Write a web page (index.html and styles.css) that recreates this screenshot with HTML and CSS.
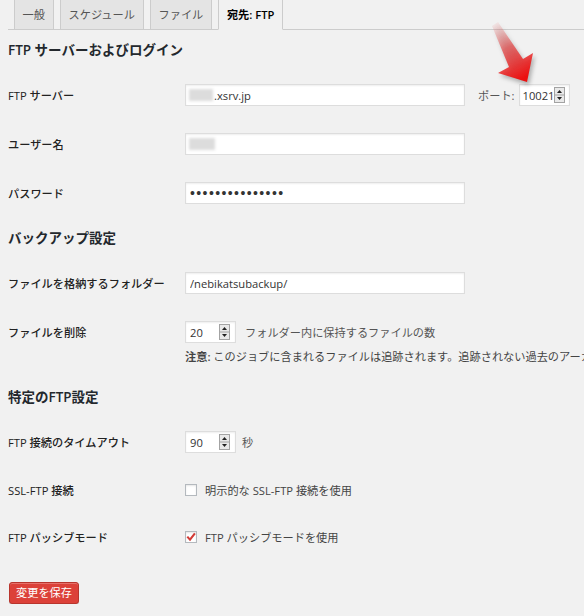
FILE: index.html
```html
<!DOCTYPE html>
<html lang="ja">
<head>
<meta charset="utf-8">
<title>宛先: FTP</title>
<link rel="stylesheet" href="styles.css">
</head>
<body>
<div class="page">
  <nav class="tabs">
    <a class="tab">一般</a>
    <a class="tab">スケジュール</a>
    <a class="tab">ファイル</a>
    <a class="tab active">宛先: FTP</a>
  </nav>

  <h3 class="section-title">FTP サーバーおよびログイン</h3>
  <div class="form-table">
    <div class="row">
      <div class="th">FTP サーバー</div>
      <div class="td line">
        <span class="field">
          <input class="text wide pad-blur" type="text" value=".xsrv.jp">
          <span class="blur b1"></span>
        </span>
        <span class="port-label">ポート:</span>
        <span class="numbox port"><input class="num" type="text" value="10021"><svg class="spin" width="11" height="16" viewBox="0 0 11 16"><rect x=".5" y=".5" width="10" height="15" fill="#e9e9e9" stroke="#a3a3a3"/><line x1="1" y1="8" x2="10" y2="8" stroke="#a3a3a3"/><path d="M5.5 3L8 6H3Z" fill="#222"/><path d="M5.5 13L8 10H3Z" fill="#222"/></svg></span>
      </div>
    </div>
    <div class="row">
      <div class="th">ユーザー名</div>
      <div class="td line">
        <span class="field">
          <input class="text wide" type="text" value="">
          <span class="blur b2"></span>
        </span>
      </div>
    </div>
    <div class="row">
      <div class="th">パスワード</div>
      <div class="td line">
        <input class="text wide pw" type="password" value="abcdefghijklmno">
      </div>
    </div>
  </div>

  <h3 class="section-title">バックアップ設定</h3>
  <div class="form-table">
    <div class="row">
      <div class="th">ファイルを格納するフォルダー</div>
      <div class="td line">
        <input class="text wide" type="text" value="/nebikatsubackup/">
      </div>
    </div>
    <div class="row row-note">
      <div class="th">ファイルを削除</div>
      <div class="td">
        <div class="line">
          <span class="numbox"><input class="num" type="text" value="20"><svg class="spin" width="11" height="16" viewBox="0 0 11 16"><rect x=".5" y=".5" width="10" height="15" fill="#e9e9e9" stroke="#a3a3a3"/><line x1="1" y1="8" x2="10" y2="8" stroke="#a3a3a3"/><path d="M5.5 3L8 6H3Z" fill="#222"/><path d="M5.5 13L8 10H3Z" fill="#222"/></svg></span>
          <span class="desc gap9">フォルダー内に保持するファイルの数</span>
        </div>
        <p class="note"><strong>注意:</strong> このジョブに含まれるファイルは追跡されます。追跡されない過去のアーカイブは削除されません。</p>
      </div>
    </div>
  </div>

  <h3 class="section-title">特定のFTP設定</h3>
  <div class="form-table">
    <div class="row">
      <div class="th">FTP 接続のタイムアウト</div>
      <div class="td line">
        <span class="numbox"><input class="num" type="text" value="90"><svg class="spin" width="11" height="16" viewBox="0 0 11 16"><rect x=".5" y=".5" width="10" height="15" fill="#e9e9e9" stroke="#a3a3a3"/><line x1="1" y1="8" x2="10" y2="8" stroke="#a3a3a3"/><path d="M5.5 3L8 6H3Z" fill="#222"/><path d="M5.5 13L8 10H3Z" fill="#222"/></svg></span>
        <span class="desc gap6">秒</span>
      </div>
    </div>
    <div class="row row-check">
      <div class="th">SSL-FTP 接続</div>
      <div class="td line">
        <label class="check"><span class="cb"></span>明示的な SSL-FTP 接続を使用</label>
      </div>
    </div>
    <div class="row row-check">
      <div class="th">FTP パッシブモード</div>
      <div class="td line">
        <label class="check"><span class="cb"><svg width="10" height="10" viewBox="0 0 10 10"><path d="M1.3 4.6L4 7.6L8.9 1.3" fill="none" stroke="#d23b36" stroke-width="2.1" stroke-linejoin="miter"/></svg></span>FTP パッシブモードを使用</label>
      </div>
    </div>
  </div>

  <p class="submit"><button class="button-primary" type="button">変更を保存</button></p>

  <svg class="arrow" width="60" height="75" viewBox="0 0 60 75">
    <defs>
      <linearGradient id="ag" x1="10" y1="8" x2="40" y2="62" gradientUnits="userSpaceOnUse">
        <stop offset="0" stop-color="#e87f7f" stop-opacity="0.1"/>
        <stop offset="0.45" stop-color="#e34a4a" stop-opacity="0.75"/>
        <stop offset="1" stop-color="#ec1010"/>
      </linearGradient>
    </defs>
    <path d="M7 11L24 52L13 58L42 67L48 38L38 44L13 7Z" fill="url(#ag)"/>
  </svg>
</div>
</body>
</html>
```

FILE: styles.css
```css
html, body {
  margin: 0;
  padding: 0;
  background: #f1f1f1;
  overflow: hidden;
}

body {
  font-family: "Open Sans", "Noto Sans CJK JP", sans-serif;
  font-size: 11.2px;
  color: #444;
  padding-left: 8px;
}

.page {
  position: relative;
}

/* tabs */
.tabs {
  display: flex;
  height: 29px;
  border-bottom: 1px solid #ccc;
}

.tab {
  box-sizing: border-box;
  height: 30px;
  margin-left: 5.6px;
  padding: 0 8px;
  border: 1px solid #ccc;
  border-top: none;
  background: #e4e4e4;
  color: #555;
  line-height: 29px;
  white-space: nowrap;
}

.tab.active {
  background: #f1f1f1;
  border-bottom-color: #f1f1f1;
  color: #000;
  font-weight: 600;
}

/* headings */
.section-title {
  margin: 10px 0 11px;
  font-size: 13.5px;
  line-height: 20px;
  font-weight: 600;
  color: #23282d;
}

/* form table */
.row {
  display: flex;
  padding: 13px 0 14px;
}

.row-note {
  padding-bottom: 12px;
}

.row-check {
  padding: 12px 0 13px;
}

.th {
  flex: none;
  box-sizing: border-box;
  width: 177px;
  height: 22px;
  line-height: 20px;
  padding-top: 2px;
  color: #222;
  font-weight: 500;
  white-space: nowrap;
}

.td {
  flex: 1;
  min-width: 0;
}

.line {
  display: flex;
  align-items: center;
  height: 22px;
}

.field {
  position: relative;
  display: inline-flex;
}

.text {
  box-sizing: border-box;
  height: 22px;
  margin: 0;
  padding: 0 4px;
  border: 1px solid #ddd;
  background: #fff;
  box-shadow: inset 0 1px 2px rgba(0, 0, 0, 0.07);
  font: inherit;
  color: #333;
  outline: none;
}

.wide {
  width: 280px;
}

.pad-blur {
  padding-left: 28px;
}

.pw {
  font-family: "Liberation Sans", sans-serif;
  font-size: 14px;
  letter-spacing: 1.4px;
  color: #333;
}

.blur {
  position: absolute;
  top: 5px;
  left: 4px;
  height: 12px;
  background: #dcdcdc;
  filter: blur(1.6px);
}

.b1 { width: 24px; }
.b2 { width: 26px; }

.port-label {
  margin-left: 13px;
  margin-right: 4px;
  color: #555;
  white-space: nowrap;
}

.numbox {
  box-sizing: border-box;
  display: inline-flex;
  align-items: center;
  width: 51px;
  height: 22px;
  border: 1px solid #ddd;
  background: #fff;
  box-shadow: inset 0 1px 2px rgba(0, 0, 0, 0.07);
}

.num {
  flex: 1;
  min-width: 0;
  margin: 0;
  padding: 0 0 0 4px;
  border: 0;
  background: transparent;
  font: inherit;
  color: #333;
  outline: none;
}

.port .num {
  padding-left: 3px;
}

.spin {
  flex: none;
  margin-right: 5px;
}

.port .spin {
  margin-right: 4px;
}

.desc {
  color: #555;
  white-space: nowrap;
}

.gap9 { margin-left: 9px; }
.gap6 { margin-left: 6px; }

.note {
  margin: 6px 0 0;
  line-height: 16px;
  white-space: nowrap;
  overflow: hidden;
  color: #444;
}

.note strong {
  font-weight: 600;
}

/* checkboxes */
.check {
  display: flex;
  align-items: center;
  color: #444;
  white-space: nowrap;
}

.cb {
  box-sizing: border-box;
  display: inline-flex;
  align-items: center;
  justify-content: center;
  width: 12px;
  height: 12px;
  margin-right: 8px;
  border: 1px solid #b4b9be;
  background: #fff;
  box-shadow: inset 0 1px 2px rgba(0, 0, 0, 0.1);
}

/* submit */
.submit {
  margin: 21px 0 0 1px;
}

.button-primary {
  box-sizing: border-box;
  height: 22px;
  padding: 0 6px;
  border: 1px solid #b8352d;
  border-radius: 3px;
  background: #dc4139;
  box-shadow: inset 0 1px 0 rgba(255, 255, 255, 0.25), 0 1px 0 rgba(0, 0, 0, 0.15);
  font: inherit;
  color: #fff;
  line-height: 20px;
}

/* annotation arrow overlay */
.arrow {
  position: absolute;
  left: 477px;
  top: 15px;
  filter: drop-shadow(2px 3px 2px rgba(0, 0, 0, 0.3));
}
```
